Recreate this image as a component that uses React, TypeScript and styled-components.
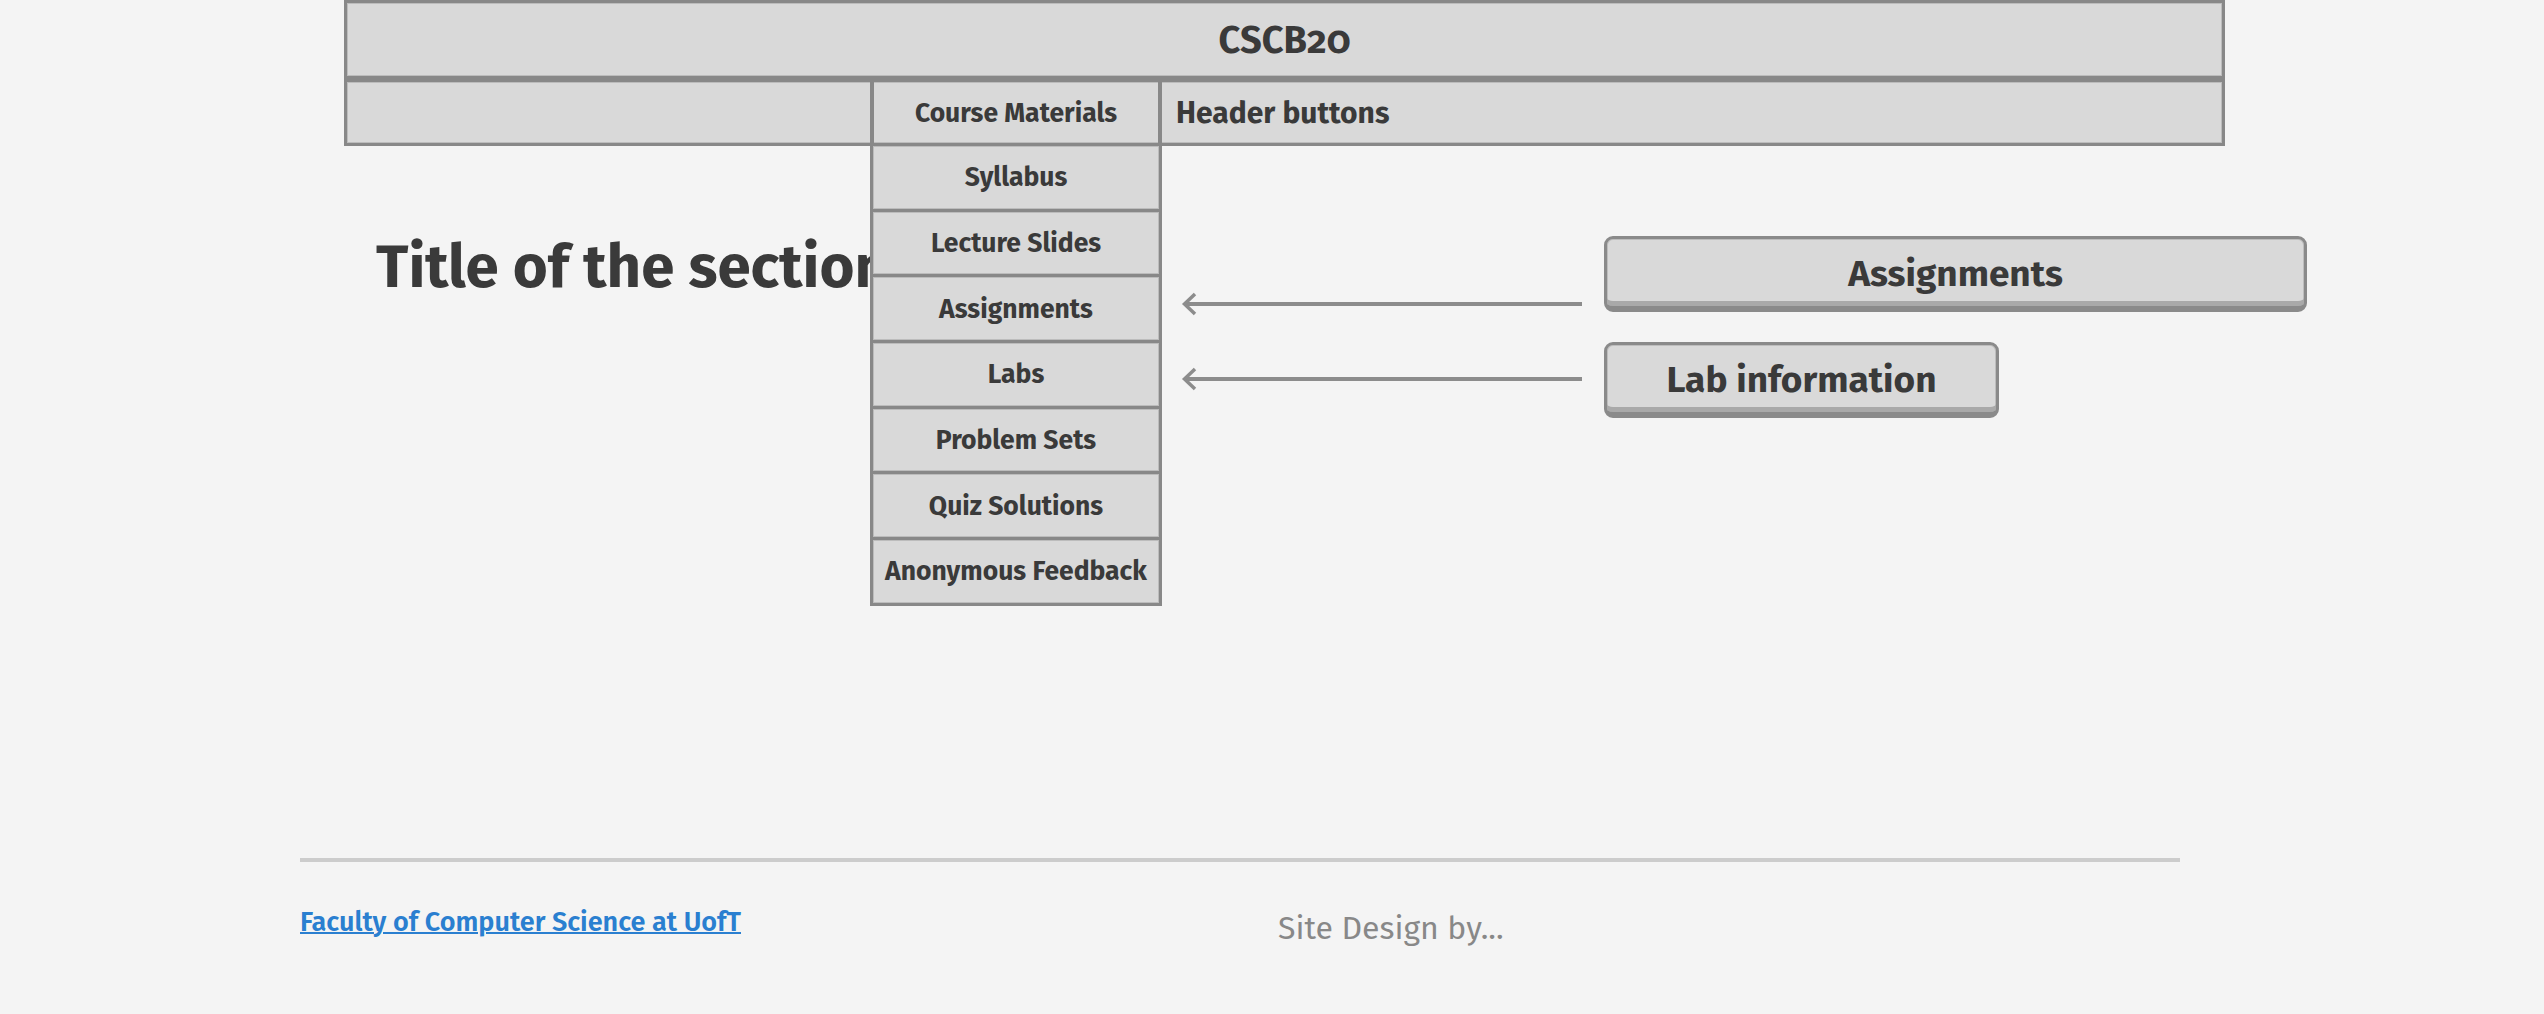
import React from 'react';
import styled, { createGlobalStyle } from 'styled-components';

const FIRA = `"Fira Sans", "Open Sans", "Noto Sans", sans-serif`;

const menuItems: string[] = [
  'Syllabus',
  'Lecture Slides',
  'Assignments',
  'Labs',
  'Problem Sets',
  'Quiz Solutions',
  'Anonymous Feedback',
];

// notes on the right side, each one points at a menu item
const notes = [
  { label: 'Assignments', width: 703, arrowTop: 56 },
  { label: 'Lab information', width: 395, arrowTop: 25 },
];

const GlobalStyle = createGlobalStyle`
  body {
    margin: 0;
    background: #f4f4f4;
    color: #3a3a3a;
    font-family: ${FIRA};
  }
`;

const Arrow: React.FC = () => (
  <ArrowSvg width="402" height="24" viewBox="0 0 402 24">
    <path d="M3 12 H401" stroke="#8c8c8c" strokeWidth="4" fill="none" />
    <path d="M14 2 L3.5 12 L14 22" stroke="#8c8c8c" strokeWidth="3.5" fill="none" strokeLinejoin="miter" />
  </ArrowSvg>
);

const App: React.FC = () => {
  return (
    <>
      <GlobalStyle />
      <Header>
        <TitleBar>CSCB20</TitleBar>
        <NavBar>
          <NavSpacer />
          <MenuCell>
            Course Materials
            <Dropdown>
              {menuItems.map((item) => (
                <DropItem key={item}>{item}</DropItem>
              ))}
            </Dropdown>
          </MenuCell>
          <NavLabel>Header buttons</NavLabel>
        </NavBar>
      </Header>

      <Main>
        <SectionTitle>Title of the section</SectionTitle>
        <Notes>
          {notes.map((n) => (
            <NoteRow key={n.label}>
              <ArrowSlot $top={n.arrowTop}>
                <Arrow />
              </ArrowSlot>
              <NoteButton $width={n.width}>{n.label}</NoteButton>
            </NoteRow>
          ))}
        </Notes>
      </Main>

      <Footer>
        <FooterRow>
          <FooterLink href="#">Faculty of Computer Science at UofT</FooterLink>
          <Credit>Site Design by...</Credit>
        </FooterRow>
      </Footer>
    </>
  );
};

export default App;

const Header = styled.header`
  margin-left: 344px;
  width: 1881px;
  position: relative;
  z-index: 2;
`;

const TitleBar = styled.div`
  box-sizing: border-box;
  height: 79px;
  display: flex;
  align-items: center;
  justify-content: center;
  background: #d9d9d9;
  border: 3px solid #888;
  box-shadow: inset 0 0 0 1px #bcbcbc;
  font-family: ${FIRA};
  font-weight: 700;
  font-size: 38px;
  font-variant-numeric: oldstyle-nums;
  color: #3a3a3a;
`;

const NavBar = styled.nav`
  box-sizing: border-box;
  height: 67px;
  display: flex;
  align-items: stretch;
  background: #d9d9d9;
  border: 3px solid #888;
  box-shadow: inset 0 0 0 1px #bcbcbc;
  font-family: ${FIRA};
  font-weight: 700;
  color: #3a3a3a;
`;

const NavSpacer = styled.div`
  width: 523px;
`;

const MenuCell = styled.div`
  position: relative;
  box-sizing: border-box;
  width: 292px;
  display: flex;
  align-items: center;
  justify-content: center;
  border-left: 4px solid #888;
  border-right: 4px solid #888;
  font-size: 26.5px;
`;

const Dropdown = styled.div`
  position: absolute;
  top: 100%;
  left: -4px;
  right: -4px;
  display: flex;
  flex-direction: column;
`;

const DropItem = styled.div`
  box-sizing: border-box;
  height: 68.7px;
  display: flex;
  align-items: center;
  justify-content: center;
  background: #d9d9d9;
  border: 3px solid #888;
  box-shadow: inset 0 0 0 1px #bcbcbc;
  font-size: 26.5px;
  white-space: nowrap;
  & + & {
    margin-top: -3px;
  }
`;

const NavLabel = styled.div`
  display: flex;
  align-items: center;
  padding-left: 14px;
  font-size: 30px;
`;

const Main = styled.main`
  box-sizing: border-box;
  min-height: 712px;
  display: flex;
  align-items: flex-start;
  padding: 88px 0 0 376px;
`;

const SectionTitle = styled.h1`
  width: 806px;
  margin: 3px 0 0;
  font-family: ${FIRA};
  font-weight: 700;
  font-size: 60px;
  line-height: 1;
  color: #3a3a3a;
  white-space: nowrap;
`;

const Notes = styled.div`
  margin-top: 2px;
  display: flex;
  flex-direction: column;
  gap: 30px;
`;

const NoteRow = styled.div`
  height: 76px;
  display: flex;
  align-items: flex-start;
  gap: 21px;
`;

const ArrowSlot = styled.div<{ $top: number }>`
  margin-top: ${(p) => p.$top}px;
  margin-left: -1px;
  line-height: 0;
`;

const ArrowSvg = styled.svg`
  display: block;
`;

const NoteButton = styled.div<{ $width: number }>`
  box-sizing: border-box;
  width: ${(p) => p.$width}px;
  height: 76px;
  display: flex;
  align-items: center;
  justify-content: center;
  padding-top: 1px;
  background: #d9d9d9;
  border: 3px solid #8a8a8a;
  border-bottom-width: 6px;
  border-radius: 9px;
  box-shadow: inset 0 -5px 0 #a9a9a9, inset 0 0 0 1px #bdbdbd;
  font-family: ${FIRA};
  font-weight: 700;
  font-size: 37px;
  color: #3a3a3a;
`;

const Footer = styled.footer`
  margin-left: 300px;
  width: 1880px;
  border-top: 4px solid #cccccc;
`;

const FooterRow = styled.div`
  display: grid;
  grid-template-columns: 978px auto;
  align-items: start;
  padding-top: 44px;
`;

const FooterLink = styled.a`
  font-family: ${FIRA};
  font-weight: 600;
  font-size: 27px;
  color: #2a7fd0;
  text-decoration: underline;
  text-decoration-thickness: 2px;
`;

const Credit = styled.span`
  margin-top: 3px;
  font-family: ${FIRA};
  font-weight: 400;
  font-size: 32px;
  color: #888;
`;
